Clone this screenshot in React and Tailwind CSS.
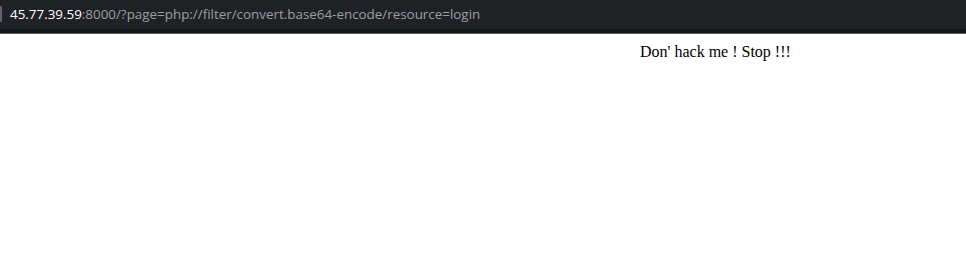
export default function App() {
  return (
    <div className="w-[966px] h-[253px] bg-white overflow-hidden">
      {/* address bar */}
      <div className="h-[29px] bg-[#202124] flex items-center relative">
        <div className="absolute left-0 top-[6px] w-[2px] h-[16px] bg-[#5f6368]" />
        <div
          className="pl-[10px] text-[13.4px] leading-none text-[#9aa0a6] whitespace-nowrap"
          style={{ fontFamily: '"Open Sans", "Liberation Sans", sans-serif' }}
        >
          <span className="text-white">45.77.39.59</span>:8000/?page=php://filter/convert.base64-encode/resource=login
        </div>
      </div>
      <div className="h-[4px] bg-[#131416]" />
      <div className="h-[1px] bg-[#5a5a5a]" />

      {/* page */}
      <div className="pl-[640px] pt-[8px]">
        <p
          className="text-[16px] leading-[20px] text-black"
          style={{ fontFamily: '"Liberation Serif", serif' }}
        >
          Don' hack me ! Stop !!!
        </p>
      </div>
    </div>
  );
}
